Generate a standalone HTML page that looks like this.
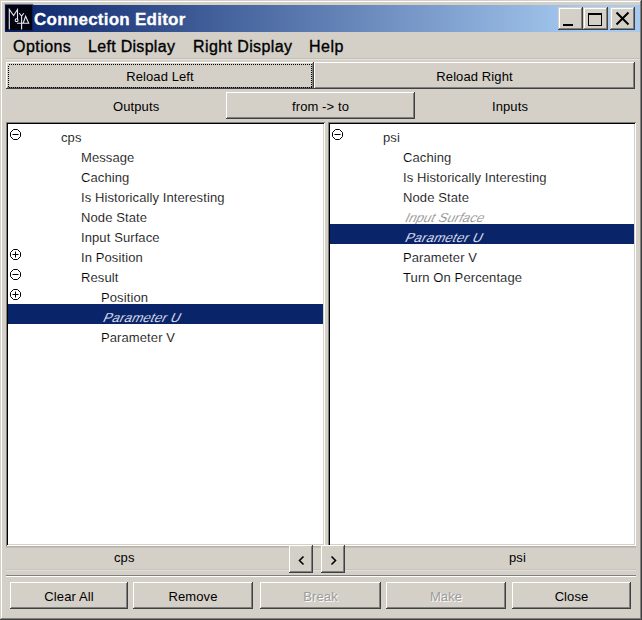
<!DOCTYPE html>
<html><head><meta charset="utf-8">
<style>
*{margin:0;padding:0;box-sizing:border-box}
html,body{width:642px;height:620px;overflow:hidden;background:#D4D0C8}
body{position:relative;font-family:"Liberation Sans",sans-serif;color:#000}
.a{position:absolute}
.t{position:absolute;white-space:nowrap;line-height:1;font-size:13px;letter-spacing:0.1px}
.btn{position:absolute;background:#D4D0C8;box-shadow:inset -1px -1px #404040,inset 1px 1px #fff,inset -2px -2px #808080}
.cbtn{position:absolute;background:#D4D0C8;box-shadow:inset -1px -1px #404040,inset 1px 1px #D4D0C8,inset -2px -2px #808080,inset 2px 2px #fff}
.pane{position:absolute;background:#fff;box-shadow:inset 1px 1px #808080,inset -1px -1px #fff,inset 2px 2px #000,inset -2px -2px #D4D0C8}
.sel{position:absolute;background:#0A246A}
.it{transform:skewX(-25deg);transform-origin:0 11px}
.mn{-webkit-text-stroke:0.35px #000}
.w{-webkit-text-stroke:0.15px #fff}
.f{-webkit-text-stroke:0.3px #D4D0C8}
.s{-webkit-text-stroke:0.15px #0A246A}
.ic{position:absolute;width:11px;height:11px}
</style></head><body>
<!-- window frame -->
<div class="a" style="left:1px;top:1px;width:1px;height:617px;background:#fff"></div>
<div class="a" style="left:1px;top:1px;width:639px;height:1px;background:#fff"></div>
<div class="a" style="left:640px;top:1px;width:1px;height:618px;background:#808080"></div>
<div class="a" style="left:1px;top:618px;width:640px;height:1px;background:#808080"></div>
<div class="a" style="left:641px;top:0;width:1px;height:620px;background:#404040"></div>
<div class="a" style="left:0;top:619px;width:642px;height:1px;background:#404040"></div>

<!-- title bar -->
<div class="a" style="left:5px;top:5px;width:635px;height:27px;background:linear-gradient(to right,#0A246A,#A6CAF0 92%)"></div>
<div class="a" style="left:6px;top:5px;width:26px;height:25px;background:#03040f;box-shadow:0 0 1px 1px rgba(10,20,70,.6)"></div>
<svg class="a" style="left:0;top:0" width="40" height="34" viewBox="0 0 40 34">
 <g fill="none" stroke="#e8e8f0" stroke-width="1.1" stroke-linecap="round">
  <path d="M9.3 29 V9.5 L13.6 15.5 L17.5 9.5 V19"/>
  <circle cx="16.6" cy="20.2" r="1.4"/>
  <path d="M19.5 13.5 L21.6 16.2 L23.6 13.5 M21.6 16.2 V29"/>
  <path d="M17.5 23.3 H28.7 L25.6 16.2 L23.2 23.3"/>
 </g>
</svg>
<div class="t" style="left:34px;top:11px;font-size:17px;font-weight:bold;color:#fff;letter-spacing:0.25px;-webkit-text-stroke:0.3px #fff">Connection Editor</div>
<!-- caption buttons -->
<div class="cbtn" style="left:558px;top:7px;width:25px;height:23px"></div>
<div class="a" style="left:563px;top:24px;width:10px;height:2px;background:#000"></div>
<div class="cbtn" style="left:583px;top:7px;width:25px;height:23px"></div>
<div class="a" style="left:588px;top:13px;width:14px;height:13px;border:1px solid #000;border-top-width:2px"></div>
<div class="cbtn" style="left:610px;top:7px;width:25px;height:23px"></div>
<svg class="a" style="left:610px;top:7px" width="25" height="23" viewBox="0 0 25 23">
 <path d="M6.5 5.5 L18.5 17.5 M18.5 5.5 L6.5 17.5" stroke="#000" stroke-width="2" fill="none"/>
</svg>

<!-- menu -->
<div class="t mn" style="left:13px;top:39px;font-size:16px;letter-spacing:0.45px">Options</div>
<div class="t mn" style="left:88px;top:39px;font-size:16px;letter-spacing:0.3px">Left Display</div>
<div class="t mn" style="left:193px;top:39px;font-size:16px;letter-spacing:0.4px">Right Display</div>
<div class="t mn" style="left:309px;top:39px;font-size:16px;letter-spacing:0.5px">Help</div>

<div class="a" style="left:5px;top:58px;width:635px;height:1px;background:#C4C0B8"></div>
<div class="a" style="left:5px;top:59px;width:635px;height:1px;background:#E4E0DC"></div>
<!-- reload buttons -->
<div class="btn" style="left:6px;top:62px;width:308px;height:27px"></div>
<svg class="a" style="left:8px;top:64px" width="304" height="24" shape-rendering="crispEdges"><rect x="0.5" y="0.5" width="303" height="23" fill="none" stroke="#000" stroke-width="1" stroke-dasharray="1 1"/></svg>
<div class="t" style="left:6px;top:70px;width:308px;text-align:center">Reload Left</div>
<div class="btn" style="left:314px;top:62px;width:321px;height:27px"></div>
<div class="t" style="left:314px;top:70px;width:321px;text-align:center">Reload Right</div>

<!-- outputs row -->
<div class="t" style="left:113px;top:100px">Outputs</div>
<div class="btn" style="left:226px;top:92px;width:189px;height:27px"></div>
<div class="t" style="left:226px;top:100px;width:189px;text-align:center">from -&gt; to</div>
<div class="t" style="left:492px;top:100px">Inputs</div>

<!-- panes -->
<div class="pane" style="left:6px;top:122px;width:319px;height:424px"></div>
<div class="pane" style="left:328px;top:122px;width:308px;height:424px"></div>

<!-- left tree -->
<svg class="a" style="left:0;top:0" width="642" height="620">
 <defs>
  <g id="oct"><path d="M3.5 0.5 H7.5 L10.5 3.5 V7.5 L7.5 10.5 H3.5 L0.5 7.5 V3.5 Z" fill="none" stroke="#000" stroke-width="1"/></g>
 </defs>
 <g transform="translate(10,129)"><use href="#oct"/><path d="M2.5 5.5 H8.5" stroke="#000"/></g>
 <g transform="translate(10,249)"><use href="#oct"/><path d="M2.5 5.5 H8.5 M5.5 2.5 V8.5" stroke="#000"/></g>
 <g transform="translate(10,269)"><use href="#oct"/><path d="M2.5 5.5 H8.5" stroke="#000"/></g>
 <g transform="translate(10,289)"><use href="#oct"/><path d="M2.5 5.5 H8.5 M5.5 2.5 V8.5" stroke="#000"/></g>
 <g transform="translate(332,129)"><use href="#oct"/><path d="M2.5 5.5 H8.5" stroke="#000"/></g>
</svg>
<div class="t w" style="left:61px;top:131px">cps</div>
<div class="t w" style="left:81px;top:151px">Message</div>
<div class="t w" style="left:81px;top:171px">Caching</div>
<div class="t w" style="left:81px;top:191px">Is Historically Interesting</div>
<div class="t w" style="left:81px;top:211px">Node State</div>
<div class="t w" style="left:81px;top:231px">Input Surface</div>
<div class="t w" style="left:81px;top:251px">In Position</div>
<div class="t w" style="left:81px;top:271px">Result</div>
<div class="t w" style="left:101px;top:291px">Position</div>
<div class="sel" style="left:8px;top:304px;width:315px;height:20px"></div>
<div class="t it s" style="left:102px;top:311px;color:#f0f2ff;letter-spacing:0.3px">Parameter U</div>
<div class="t w" style="left:101px;top:331px">Parameter V</div>

<!-- right tree -->
<div class="t w" style="left:383px;top:131px">psi</div>
<div class="t w" style="left:403px;top:151px">Caching</div>
<div class="t w" style="left:403px;top:171px">Is Historically Interesting</div>
<div class="t w" style="left:403px;top:191px">Node State</div>
<div class="t it w" style="left:404px;top:211px;color:#8c8c8c">Input Surface</div>
<div class="sel" style="left:330px;top:224px;width:304px;height:20px"></div>
<div class="t it s" style="left:404px;top:231px;color:#f0f2ff;letter-spacing:0.3px">Parameter U</div>
<div class="t w" style="left:403px;top:251px">Parameter V</div>
<div class="t w" style="left:403px;top:271px">Turn On Percentage</div>

<!-- label row -->
<div class="a" style="left:6px;top:546px;width:630px;height:1px;background:#B4B0A8"></div>
<div class="a" style="left:6px;top:547px;width:630px;height:1px;background:#C4C0B8"></div>
<div class="a" style="left:6px;top:569px;width:630px;height:1px;background:#C8C4BC"></div>
<div class="a" style="left:6px;top:570px;width:630px;height:1px;background:#E0DCD8"></div>
<div class="t" style="left:114px;top:551px">cps</div>
<div class="btn" style="left:289px;top:545px;width:24px;height:28px"></div>
<svg class="a" style="left:290px;top:546px" width="23" height="27"><path d="M13.5 10.5 L9.5 14.5 L13.5 18.5" stroke="#000" stroke-width="1.6" fill="none"/></svg>
<div class="btn" style="left:321px;top:545px;width:24px;height:28px"></div>
<svg class="a" style="left:321px;top:546px" width="24" height="27"><path d="M10.5 10.5 L14.5 14.5 L10.5 18.5" stroke="#000" stroke-width="1.6" fill="none"/></svg>
<div class="t" style="left:509px;top:551px">psi</div>
<div class="a" style="left:6px;top:575px;width:630px;height:1px;background:#808080"></div>
<div class="a" style="left:6px;top:576px;width:630px;height:1px;background:#fff"></div>

<!-- bottom buttons -->
<div class="btn" style="left:10px;top:582px;width:118px;height:27px"></div>
<div class="t" style="left:10px;top:590px;width:118px;text-align:center">Clear All</div>
<div class="btn" style="left:133px;top:582px;width:120px;height:27px"></div>
<div class="t" style="left:133px;top:590px;width:120px;text-align:center">Remove</div>
<div class="btn" style="left:260px;top:582px;width:121px;height:27px"></div>
<div class="t" style="left:260px;top:590px;width:121px;text-align:center;color:#9c9c9c;text-shadow:1px 1px #fff">Break</div>
<div class="btn" style="left:386px;top:582px;width:120px;height:27px"></div>
<div class="t" style="left:386px;top:590px;width:120px;text-align:center;color:#9c9c9c;text-shadow:1px 1px #fff">Make</div>
<div class="btn" style="left:512px;top:582px;width:119px;height:27px"></div>
<div class="t" style="left:512px;top:590px;width:119px;text-align:center">Close</div>
</body></html>
